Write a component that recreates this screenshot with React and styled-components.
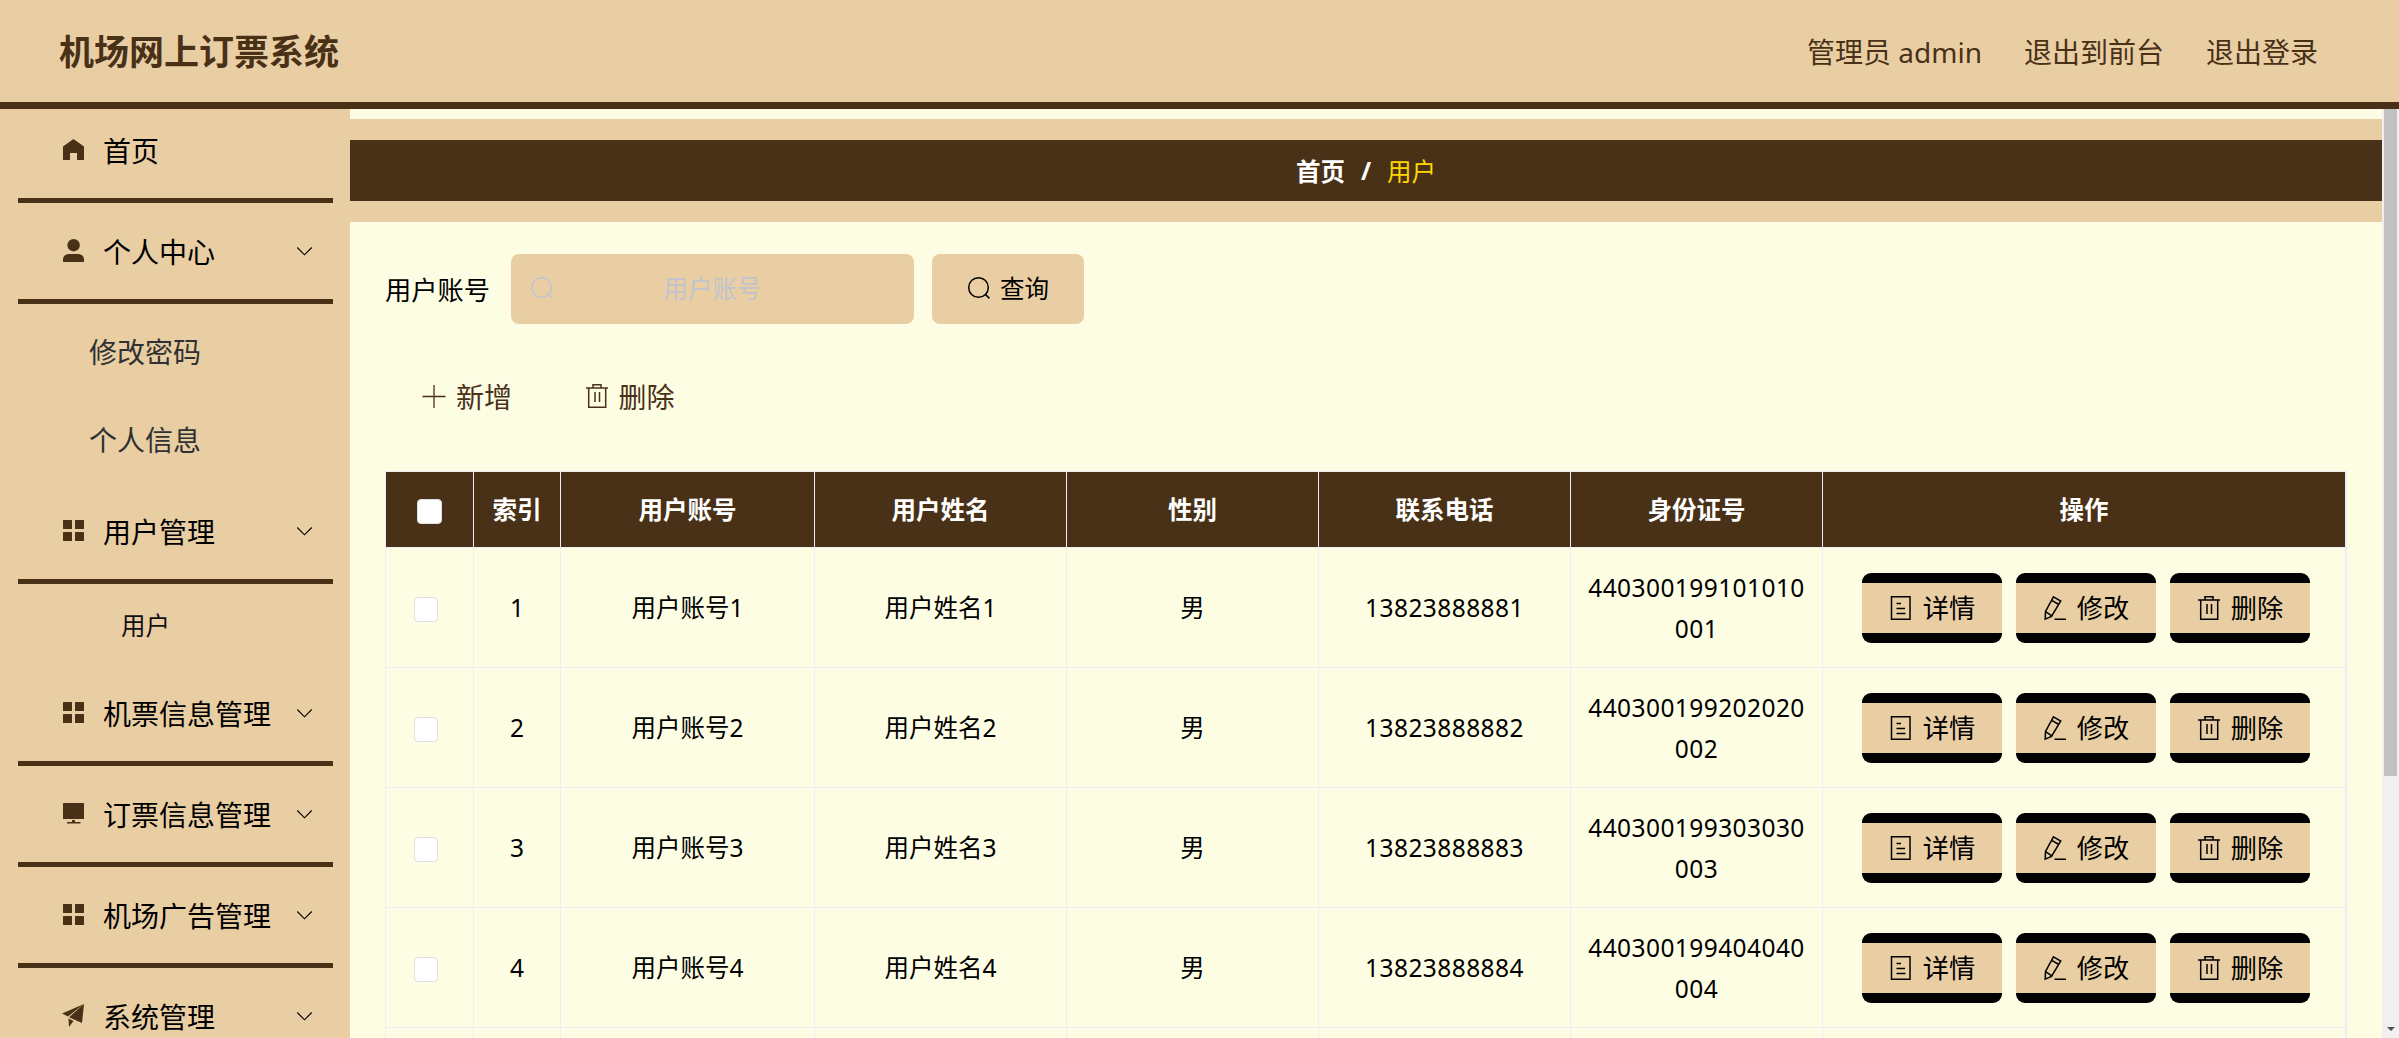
import styled, { createGlobalStyle } from "styled-components";

const GlobalStyle = createGlobalStyle`
  * {
    box-sizing: border-box;
  }

  body {
    margin: 0;
    overflow: hidden;
    font-family: "Noto Sans", "Noto Sans CJK SC", sans-serif;
    color: #000;
    background-color: #fdfde4;
  }
`;

const Page = styled.div`
  height: 100vh;
  display: flex;
  flex-direction: column;
  overflow: hidden;
`;

const Header = styled.header`
  flex: none;
  height: 109px;
  padding: 1px 81px 0 59px;
  display: flex;
  justify-content: space-between;
  align-items: center;
  color: #493117;
  background-color: #e9cea4;
  border-bottom: 7px solid #493117;
`;

const Title = styled.h1`
  margin: 0;
  font-size: 35px;
  line-height: 50px;
  font-weight: 700;
`;

const HeaderLinks = styled.nav`
  display: flex;
  gap: 42px;
  font-size: 28px;
  line-height: 40px;
`;

const Body = styled.div`
  flex: 1;
  min-height: 0;
  display: flex;
`;

const Sidebar = styled.aside`
  flex: none;
  width: 350px;
  padding: 0 17px 0 18px;
  overflow: hidden;
  background-color: #e9cea4;
`;

const MenuItem = styled.div`
  height: ${({ $first }) => ($first ? 94 : 101)}px;
  padding: ${({ $first }) => ($first ? "0 21px 7px 34px" : "0 21px 0 34px")};
  display: flex;
  align-items: center;
  font-size: 28px;
  border-bottom: 5px solid #493117;
`;

const MenuIcon = styled.span`
  width: 42px;
  margin: -2px 9px 0 0;
  display: flex;
  justify-content: center;
  color: #493117;
`;

const MenuText = styled.span`
  flex: 1;
  line-height: 40px;
  padding-top: 2px;
`;

const SubMenu = styled.div`
  padding-top: 4px;
`;

const SubItem = styled.div`
  height: 87.5px;
  padding-left: 71px;
  font-size: 28px;
  line-height: 89px;
  color: #303133;
`;

const ActiveSubItem = styled.div`
  height: 81px;
  padding-left: 103px;
  font-size: 24.5px;
  line-height: 83px;
  color: #111;
`;

const Main = styled.main`
  flex: 1;
  min-width: 0;
  padding-top: 10px;
  overflow: hidden;
`;

const Breadcrumb = styled.div`
  height: 103px;
  display: flex;
  justify-content: center;
  align-items: center;
  gap: 16px;
  font-size: 24.5px;
  font-weight: 700;
  color: #fff;
  background-color: #493117;
  border: solid #e9cea4;
  border-width: 21px 0;
`;

const Current = styled.span`
  font-weight: 400;
  color: #ffd700;
`;

const Content = styled.div`
  padding: 32px 35px 0;
`;

const SearchRow = styled.div`
  display: flex;
  align-items: center;
  height: 70px;
`;

const Label = styled.label`
  width: 126px;
  font-size: 26.25px;
`;

const InputBox = styled.div`
  width: 403px;
  height: 70px;
  padding: 0 20px 2px;
  display: flex;
  align-items: center;
  color: #c0c4cc;
  background-color: #e9cea4;
  border-radius: 8px;
`;

const Input = styled.input`
  flex: 1;
  min-width: 0;
  padding: 0 22px 0 0;
  border: 0;
  outline: 0;
  background: none;
  font: inherit;
  font-size: 24.5px;
  text-align: center;

  &::placeholder {
    color: #c0c4cc;
    opacity: 1;
  }
`;

const QueryButton = styled.button`
  width: 152px;
  height: 70px;
  margin-left: 18px;
  padding: 0 0 3px 1px;
  display: flex;
  justify-content: center;
  align-items: center;
  gap: 10px;
  border: 0;
  border-radius: 8px;
  font: inherit;
  font-size: 24.5px;
  color: #000;
  background-color: #e9cea4;
`;

const Toolbar = styled.div`
  height: 147px;
  padding: 0 0 3px 36px;
  display: flex;
  align-items: center;
  gap: 71.5px;
`;

const ToolButton = styled.button`
  padding: 0;
  display: flex;
  align-items: center;
  gap: 9px;
  border: 0;
  background: none;
  font: inherit;
  font-size: 28px;
  color: #493117;
`;

const Table = styled.div`
  width: 1962px;
  border: 1px solid #ebeef5;
  border-right-width: 2px;
`;

const Row = styled.div`
  display: grid;
  grid-template-columns: 88px 87px 254px repeat(4, 252px) 1fr;
  height: ${({ $head }) => ($head ? 76 : 120)}px;
  font-size: 24.5px;
  font-weight: ${({ $head }) => ($head ? 700 : 400)};
  line-height: 41px;
  color: ${({ $head }) => ($head ? "#fff" : "#000")};
  background-color: ${({ $head }) => ($head ? "#493117" : "transparent")};
`;

const Cell = styled.div`
  padding: 0 17px;
  display: flex;
  justify-content: center;
  align-items: center;
  text-align: center;
  border-right: 1px solid #ebeef5;
  border-bottom: 1px solid #ebeef5;

  &:last-child {
    border-right: 0;
  }
`;

const Digits = styled.span`
  letter-spacing: 0.42px;
  word-break: break-all;
`;

const Checkbox = styled.span`
  width: ${({ $head }) => ($head ? 25 : 24)}px;
  height: 25px;
  margin: ${({ $head }) => ($head ? "3px 0 0" : "4px 8px 0 0")};
  flex: none;
  background-color: #fff;
  border: 1px solid #dcdfe6;
  border-radius: 4px;
`;

const Actions = styled(Cell)`
  gap: 14px;
  padding: 0 0 0 3px;
`;

const ActionButton = styled.button`
  width: 140px;
  height: 70px;
  padding: 1px 0 0;
  display: flex;
  justify-content: center;
  align-items: center;
  gap: 9px;
  border: solid #000;
  border-width: 10px 0;
  border-radius: 9px;
  font: inherit;
  font-size: 26.25px;
  color: #000;
  background-color: #e9cea4;
`;

const Scrollbar = styled.div`
  flex: none;
  width: 17px;
  padding: 0 2px 7px;
  display: flex;
  flex-direction: column;
  justify-content: space-between;
  align-items: center;
  background-color: #f0f0f0;
`;

const Thumb = styled.div`
  width: 13px;
  height: 667px;
  background-color: #c1c1c1;
`;

const ScrollArrow = styled.div`
  border: solid transparent;
  border-width: 4px 4px 0;
  border-top-color: #505050;
`;

const Svg = styled.svg`
  flex: none;
  display: block;
  overflow: visible;
`;

const Line = ({ w, h, stroke = 1.5, children }) => (
  <Svg
    width={w}
    height={h}
    viewBox={`0 0 ${w} ${h}`}
    fill="none"
    stroke="currentColor"
    strokeWidth={stroke}
  >
    {children}
  </Svg>
);

const Solid = ({ h = 21, children }) => (
  <Svg width="21" height={h} viewBox={`0 0 21 ${h}`} fill="currentColor">
    {children}
  </Svg>
);

const HomeIcon = () => (
  <Solid>
    <path d="M10.5 0 21 7.6V21h-7v-7H7v7H0V7.6Z" />
  </Solid>
);

const UserIcon = () => (
  <Solid h={23}>
    <circle cx="10.6" cy="6.2" r="6.2" />
    <path d="M0 23v-2.5a5.500 5.500 0 0 1 5.500-5.500h10a5.500 5.500 0 0 1 5.500 5.500V23Z" />
  </Solid>
);

const GridIcon = () => (
  <Solid>
    <rect width="9" height="9" rx="0.6" />
    <rect x="12" width="9" height="9" rx="0.6" />
    <rect y="12" width="9" height="9" rx="0.6" />
    <rect x="12" y="12" width="9" height="9" rx="0.6" />
  </Solid>
);

const MonitorIcon = () => (
  <Solid>
    <rect width="21" height="16" rx="0.6" />
    <path d="M9 17h3v2h5.500v1.600h-13.500v-1.600H9Z" />
  </Solid>
);

const PlaneIcon = () => (
  <Solid h={23}>
    <path d="M21 0-1 9.500l6 3Z" />
    <path d="M21 0 6 13.200 19 19Z" />
    <path d="M5.500 14.500 10.500 17 6 23Z" />
  </Solid>
);

const ArrowIcon = () => (
  <Line w={15} h={9} stroke={1.1}>
    <path d="m.3.500 7.200 7.300L14.700.500" />
  </Line>
);

const SearchIcon = () => (
  <Line w={22} h={22}>
    <circle cx="10.500" cy="10.500" r="9.800" />
    <path d="m17.400 17.400 4 4" />
  </Line>
);

const PlusIcon = () => (
  <Line w={26} h={23} stroke={1.3}>
    <path d="M13 0v23M1.500 11.500h23" />
  </Line>
);

const TrashIcon = () => (
  <Line w={26} h={24}>
    <path d="M2 4h22M4.700 4V23.200h17V4M9 4V.800h8v3.200M11 8v10M15.500 8v10" />
  </Line>
);

const DetailIcon = () => (
  <Line w={26} h={24}>
    <path d="M3.500.800h18.500v22.400H3.500ZM8.500 7.500h4.500M8.500 12.500h8.500M8.500 17.500h9" />
  </Line>
);

const EditIcon = () => (
  <Line w={26} h={24}>
    <path d="m11.500.800 7.200 4.200L9.500 20.500l-6.300 2.700L3.500 15.500ZM9.800 4.300l7 4.200M3.600 15.700l6.200 4.100M12.500 23.200h11.500" />
  </Line>
);

const rows = [
  { id: 1, phone: "13823888881", card: "440300199101010001" },
  { id: 2, phone: "13823888882", card: "440300199202020002" },
  { id: 3, phone: "13823888883", card: "440300199303030003" },
  { id: 4, phone: "13823888884", card: "440300199404040004" },
];

const columns = ["索引", "用户账号", "用户姓名", "性别", "联系电话", "身份证号", "操作"];

function Item({ icon, first, children }) {
  return (
    <MenuItem $first={first}>
      <MenuIcon>{icon}</MenuIcon>
      <MenuText>{children}</MenuText>
      {!first && <ArrowIcon />}
    </MenuItem>
  );
}

export default function App() {
  return (
    <Page>
      <GlobalStyle />
      <Header>
        <Title>机场网上订票系统</Title>
        <HeaderLinks>
          <span>管理员 admin</span>
          <span>退出到前台</span>
          <span>退出登录</span>
        </HeaderLinks>
      </Header>
      <Body>
        <Sidebar>
          <Item first icon={<HomeIcon />}>首页</Item>
          <Item icon={<UserIcon />}>个人中心</Item>
          <SubMenu>
            <SubItem>修改密码</SubItem>
            <SubItem>个人信息</SubItem>
          </SubMenu>
          <Item icon={<GridIcon />}>用户管理</Item>
          <ActiveSubItem>用户</ActiveSubItem>
          <Item icon={<GridIcon />}>机票信息管理</Item>
          <Item icon={<MonitorIcon />}>订票信息管理</Item>
          <Item icon={<GridIcon />}>机场广告管理</Item>
          <Item icon={<PlaneIcon />}>系统管理</Item>
        </Sidebar>
        <Main>
          <Breadcrumb>
            <span>首页</span>
            <span>/</span>
            <Current>用户</Current>
          </Breadcrumb>
          <Content>
            <SearchRow>
              <Label>用户账号</Label>
              <InputBox>
                <SearchIcon />
                <Input placeholder="用户账号" />
              </InputBox>
              <QueryButton>
                <SearchIcon />
                查询
              </QueryButton>
            </SearchRow>
            <Toolbar>
              <ToolButton>
                <PlusIcon />
                新增
              </ToolButton>
              <ToolButton>
                <TrashIcon />
                删除
              </ToolButton>
            </Toolbar>
            <Table>
              <Row $head>
                <Cell>
                  <Checkbox $head />
                </Cell>
                {columns.map((name) => (
                  <Cell key={name}>{name}</Cell>
                ))}
              </Row>
              {rows.map(({ id, phone, card }) => (
                <Row key={id}>
                  <Cell>
                    <Checkbox />
                  </Cell>
                  <Cell>{id}</Cell>
                  <Cell>用户账号{id}</Cell>
                  <Cell>用户姓名{id}</Cell>
                  <Cell>男</Cell>
                  <Cell>
                    <Digits>{phone}</Digits>
                  </Cell>
                  <Cell>
                    <Digits>{card}</Digits>
                  </Cell>
                  <Actions>
                    <ActionButton>
                      <DetailIcon />
                      详情
                    </ActionButton>
                    <ActionButton>
                      <EditIcon />
                      修改
                    </ActionButton>
                    <ActionButton>
                      <TrashIcon />
                      删除
                    </ActionButton>
                  </Actions>
                </Row>
              ))}
              <Row>
                <Cell />
                {columns.map((name) => (
                  <Cell key={name} />
                ))}
              </Row>
            </Table>
          </Content>
        </Main>
        <Scrollbar>
          <Thumb />
          <ScrollArrow />
        </Scrollbar>
      </Body>
    </Page>
  );
}
